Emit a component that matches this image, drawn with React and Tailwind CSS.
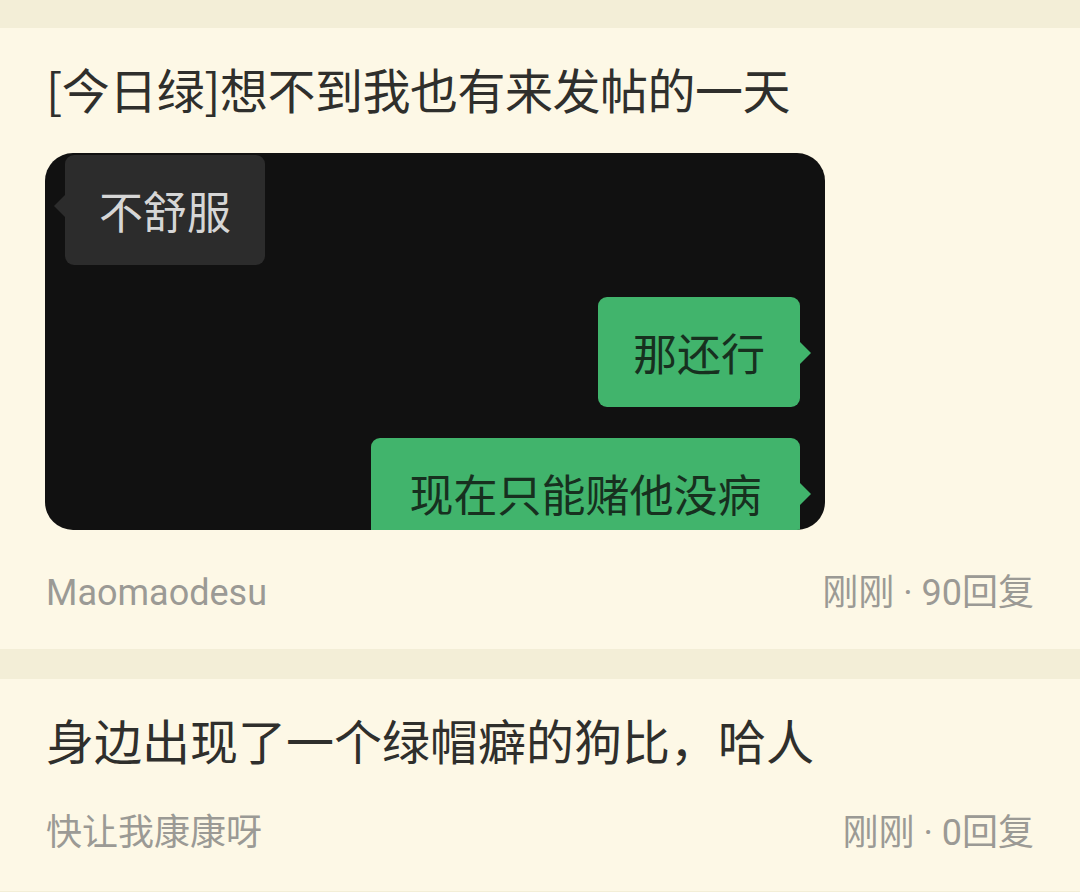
const font = { fontFamily: '"Noto Sans CJK SC", sans-serif' };

const Bubble = ({ side, className, textClass, children }) => (
  <div className={`relative flex shrink-0 items-center rounded-[9px] ${className}`}>
    {side === "left" ? (
      <span className="absolute -left-[11px] top-[40px] h-0 w-0 border-y-[11px] border-r-[11px] border-y-transparent border-r-[#2c2c2c]" />
    ) : (
      <span className="absolute -right-[11px] top-[45px] h-0 w-0 border-y-[11px] border-l-[11px] border-y-transparent border-l-[#41b46c]" />
    )}
    <span className={`text-[44px] leading-none ${textClass}`}>{children}</span>
  </div>
);

const ChatShot = () => (
  <div className="flex h-[377px] w-[780px] flex-col overflow-hidden rounded-[28px] bg-[#111111]">
    <Bubble
      side="left"
      className="ml-[20px] mt-[2px] h-[110px] w-[200px] self-start justify-center bg-[#2c2c2c]"
      textClass="text-[#d6d6d6]"
    >
      不舒服
    </Bubble>
    <Bubble
      side="right"
      className="mr-[25px] mt-[32px] h-[110px] w-[202px] self-end justify-center bg-[#41b46c]"
      textClass="text-[#17301f]"
    >
      那还行
    </Bubble>
    <Bubble
      side="right"
      className="mr-[25px] mt-[31px] h-[110px] w-[429px] self-end items-start justify-center pt-[33px] bg-[#41b46c]"
      textClass="text-[#17301f]"
    >
      现在只能赌他没病
    </Bubble>
  </div>
);

const Meta = ({ author, replies }) => (
  <div
    className="flex items-center justify-between text-[36px] leading-none text-[#9b9a95]"
    style={{ fontFamily: 'Roboto, "Noto Sans CJK SC", sans-serif' }}
  >
    <span>{author}</span>
    <span>刚刚 · {replies}回复</span>
  </div>
);

export default function App() {
  return (
    <div className="flex h-[892px] w-[1080px] flex-col overflow-hidden bg-[#f3eed7]" style={font}>
      <div className="mt-[28px] flex flex-col bg-[#fdf8e6] px-[46px] pb-[38px] pt-[36px]">
        <h2 className="text-[48px] leading-none tracking-[-0.5px] text-[#2f2f2c]">[今日绿]想不到我也有来发帖的一天</h2>
        <div className="mt-[41px] -ml-[1px]">
          <ChatShot />
        </div>
        <div className="mt-[45px]">
          <Meta author="Maomaodesu" replies="90" />
        </div>
      </div>
      <div className="mt-[30px] flex h-[212px] shrink-0 flex-col bg-[#fdf8e6] px-[46px]">
        <h2 className="mt-[36px] text-[48px] leading-none text-[#2f2f2c]">身边出现了一个绿帽癖的狗比，哈人</h2>
        <div className="mt-[52px]">
          <Meta author="快让我康康呀" replies="0" />
        </div>
      </div>
    </div>
  );
}
